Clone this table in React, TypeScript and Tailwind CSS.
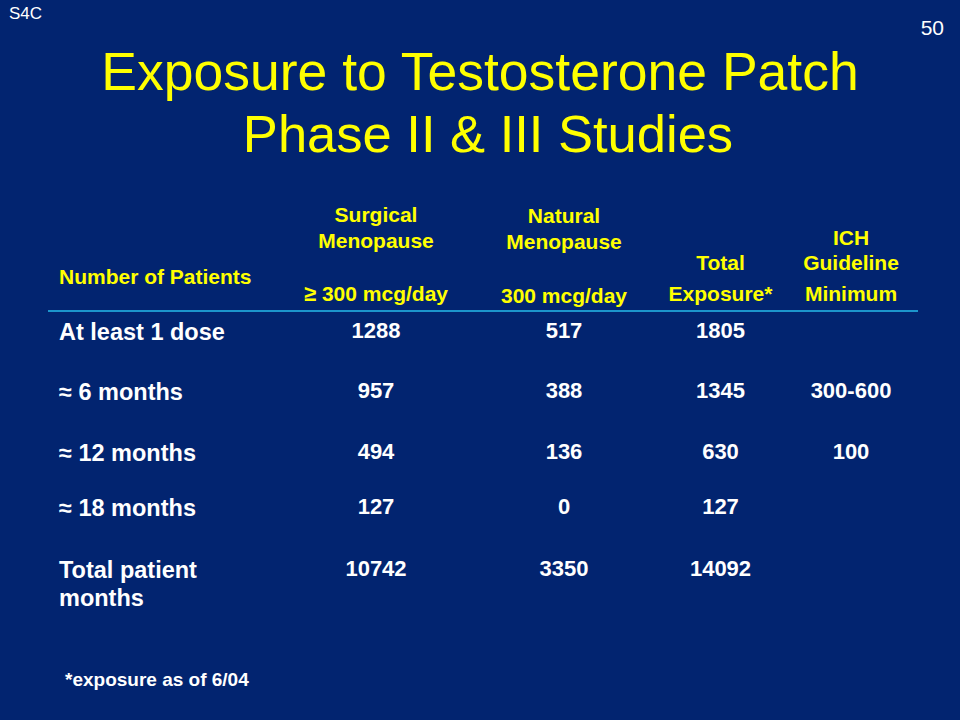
import React from "react";

const rows = [
  { label: ["At least 1 dose"], vals: ["1288", "517", "1805", ""], h: "h-[60px]", pt: "pt-[6px]" },
  { label: ["≈ 6 months"], vals: ["957", "388", "1345", "300-600"], h: "h-[61px]", pt: "pt-[6px]" },
  { label: ["≈ 12 months"], vals: ["494", "136", "630", "100"], h: "h-[55px]", pt: "pt-[6px]" },
  { label: ["≈ 18 months"], vals: ["127", "0", "127", ""], h: "h-[61px]", pt: "pt-[6px]" },
  { label: ["Total patient", "months"], vals: ["10742", "3350", "14092", ""], h: "h-[64px]", pt: "pt-[7px]" },
];

const App = () => {
  return (
    <div className="w-[960px] h-[720px] bg-[#022470] font-['Liberation_Sans',Arial,sans-serif] overflow-hidden">
      {/* corner labels */}
      <div className="h-[41px] flex justify-between items-start text-white">
        <span className="pl-[9px] pt-[4px] text-[17px] leading-[20px]">S4C</span>
        <span className="pr-[16px] pt-[16px] text-[21px] leading-[24px]">50</span>
      </div>

      {/* title */}
      <h1 className="text-center text-[#ffff00] text-[53.5px] leading-[62px]">
        <div>Exposure to Testosterone Patch</div>
        <div className="pl-[16px] text-[52.5px]">Phase II &amp; III Studies</div>
      </h1>

      {/* table */}
      <div className="ml-[48px] mt-[37px] w-[870px]">
        <div className="grid grid-cols-[242px_172px_204px_109px_143px] border-b-2 border-[#1c95cc] text-[#ffff00] font-bold text-[21px] leading-[26px]">
          <div className="flex flex-col justify-end pl-[11px] pb-[20px]">
            <span>Number of Patients</span>
          </div>
          <div className="flex flex-col justify-end items-center pb-[3px]">
            <span>Surgical</span>
            <span>Menopause</span>
            <span className="mt-[27px]">
              <span className="text-[22px]">≥</span> 300 mcg/day
            </span>
          </div>
          <div className="flex flex-col justify-end items-center pb-[1px]">
            <span>Natural</span>
            <span>Menopause</span>
            <span className="mt-[28px]">300 mcg/day</span>
          </div>
          <div className="flex flex-col justify-end items-center pb-[3px]">
            <span>Total</span>
            <span className="mt-[5px]">Exposure*</span>
          </div>
          <div className="flex flex-col justify-end items-center pl-[9px] pb-[3px]">
            <span className="leading-[25px]">ICH</span>
            <span className="leading-[25px]">Guideline</span>
            <span className="mt-[6px]">Minimum</span>
          </div>
        </div>

        {rows.map((r) => (
          <div
            key={r.label[0]}
            className={`grid grid-cols-[242px_172px_204px_109px_143px] text-white font-bold text-[22px] ${r.h} ${r.pt}`}
          >
            <div className="pl-[11px] text-[23.5px] leading-[28px]">
              {r.label.map((l) => (
                <div key={l}>{l}</div>
              ))}
            </div>
            <div className="text-center leading-[26px]">{r.vals[0]}</div>
            <div className="text-center leading-[26px]">{r.vals[1]}</div>
            <div className="text-center leading-[26px]">{r.vals[2]}</div>
            <div className="text-center leading-[26px] pl-[9px]">{r.vals[3]}</div>
          </div>
        ))}
      </div>

      <p className="ml-[65px] mt-[56px] text-white font-bold text-[19px] leading-[22px]">
        *exposure as of 6/04
      </p>
    </div>
  );
};

export default App;
